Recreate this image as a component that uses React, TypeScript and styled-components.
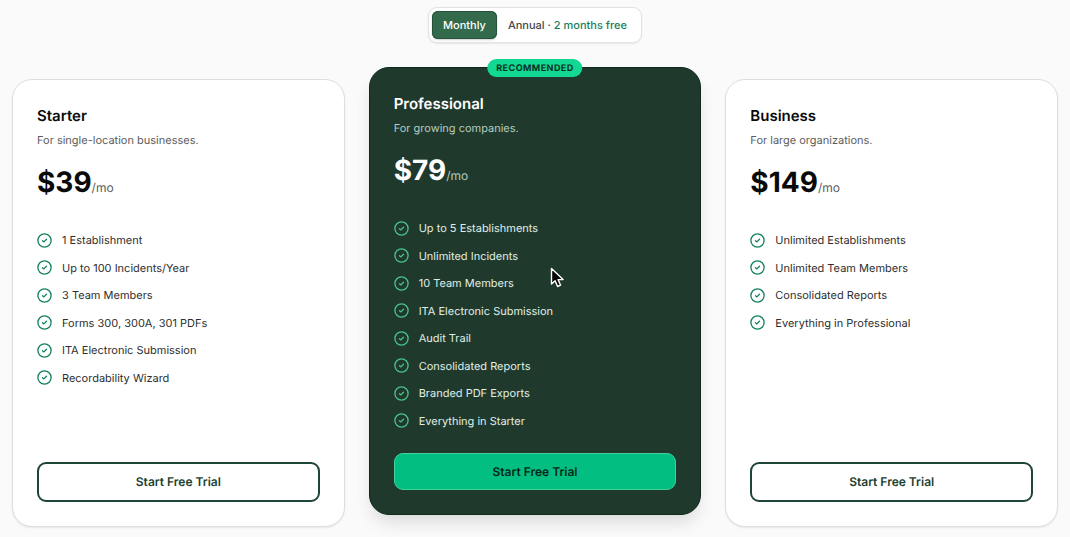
import { useState } from "react";
import styled, { createGlobalStyle, css } from "styled-components";

const GlobalStyle = createGlobalStyle`
  *, *::before, *::after { box-sizing: border-box; }
  body {
    margin: 0;
    background: #fafafa;
    color: #0a0a0a;
    font-family: Inter, "Liberation Sans", sans-serif;
    -webkit-font-smoothing: antialiased;
    text-rendering: geometricPrecision;
  }
  h2, p, ul { margin: 0; padding: 0; }
  button { font-family: inherit; text-rendering: inherit; cursor: pointer; }
`;

const Page = styled.main`
  display: flex;
  flex-direction: column;
  gap: 36px;
  padding: 7px 12px 10px;
`;

const Toggle = styled.div`
  align-self: center;
  display: flex;
  padding: 3px;
  background: #fff;
  border: 1px solid #e2e2e2;
  border-radius: 9px;
  box-shadow: 0 1px 2px rgba(0, 0, 0, 0.08);
`;

const ToggleButton = styled.button<{ $active: boolean }>`
  height: 28px;
  padding: 0 11px;
  border: 0;
  border-radius: 6px;
  font-size: 11px;
  font-weight: 500;
  line-height: 16px;
  background: ${(p) => (p.$active ? "#336a4c" : "transparent")};
  color: ${(p) => (p.$active ? "#fff" : "#44474a")};
  box-shadow: ${(p) => (p.$active ? "0 0 0 1px #24523a inset, 0 1px 2px rgba(0, 0, 0, 0.2)" : "none")};
`;

const Saving = styled.span`
  color: #16805c;
`;

const Plans = styled.div`
  display: grid;
  grid-template-columns: repeat(3, minmax(0, 1fr));
  gap: 24px;
`;

const Card = styled.section<{ $featured: boolean }>`
  position: relative;
  display: flex;
  flex-direction: column;
  padding: 24px;
  border: 1px solid #dedede;
  border-radius: 20px;
  background: #fff;
  box-shadow: 0 1px 2px rgba(0, 0, 0, 0.08);
  ${(p) =>
    p.$featured &&
    css`
      transform: translateY(-12px);
      border-color: #10291f;
      background: #1f392c;
      color: #fff;
      box-shadow: 0 10px 18px -4px rgba(0, 0, 0, 0.14);
    `}
`;

const Badge = styled.span`
  position: absolute;
  top: -9px;
  left: 50%;
  transform: translateX(-50%);
  padding: 1px 9px 0;
  border-radius: 9px;
  background: #13d893;
  color: #06321f;
  font-size: 9px;
  font-weight: 700;
  line-height: 17px;
  letter-spacing: 0.05em;
`;

const PlanName = styled.h2`
  font-size: 15px;
  font-weight: 600;
  line-height: 24px;
`;

const Tagline = styled.p<{ $featured: boolean }>`
  margin-top: 4px;
  font-size: 11px;
  line-height: 16px;
  color: ${(p) => (p.$featured ? "#b4cdbf" : "#5c5c5c")};
`;

const Price = styled.p`
  margin-top: 16px;
  font-size: 28px;
  font-weight: 700;
  line-height: 36px;
`;

const Period = styled.span<{ $featured: boolean }>`
  font-size: 12px;
  font-weight: 400;
  line-height: 16px;
  color: ${(p) => (p.$featured ? "#b4cdbf" : "#5c5c5c")};
`;

const Features = styled.ul`
  display: flex;
  flex-direction: column;
  gap: 11px;
  margin: 32px 0 24px;
  list-style: none;
`;

const Feature = styled.li<{ $featured: boolean }>`
  display: flex;
  align-items: center;
  gap: 10px;
  font-size: 11px;
  line-height: 1.5;
  color: ${(p) => (p.$featured ? "#e0efe6" : "#2e2e2e")};

  svg {
    flex: none;
    color: ${(p) => (p.$featured ? "#4cc38c" : "#128060")};
  }
`;

const TrialButton = styled.button<{ $featured: boolean }>`
  width: 100%;
  height: ${(p) => (p.$featured ? 37 : 40)}px;
  margin-top: auto;
  border: ${(p) => (p.$featured ? "1px solid #3fd39a" : "2px solid #1f4535")};
  border-radius: 9px;
  background: ${(p) => (p.$featured ? "#02be80" : "#fff")};
  color: ${(p) => (p.$featured ? "#06281a" : "#1d4030")};
  font-size: 12px;
  font-weight: 600;
  line-height: 16px;
`;

const Pointer = styled.svg`
  position: absolute;
  top: 199px;
  left: 180px;
  pointer-events: none;
`;

const CheckIcon = () => (
  <svg width="15" height="15" viewBox="0 0 15 15" fill="none" stroke="currentColor" aria-hidden="true">
    <circle cx="7.5" cy="7.5" r="6.6" strokeWidth="1.3" />
    <path d="M5.5 7.7 6.9 8.9 9.5 6.3" strokeWidth="1.3" strokeLinecap="round" strokeLinejoin="round" />
  </svg>
);

type Plan = {
  name: string;
  tagline: string;
  price: number;
  features: string[];
  featured?: boolean;
};

const plans: Plan[] = [
  {
    name: "Starter",
    tagline: "For single-location businesses.",
    price: 39,
    features: [
      "1 Establishment",
      "Up to 100 Incidents/Year",
      "3 Team Members",
      "Forms 300, 300A, 301 PDFs",
      "ITA Electronic Submission",
      "Recordability Wizard",
    ],
  },
  {
    name: "Professional",
    tagline: "For growing companies.",
    price: 79,
    featured: true,
    features: [
      "Up to 5 Establishments",
      "Unlimited Incidents",
      "10 Team Members",
      "ITA Electronic Submission",
      "Audit Trail",
      "Consolidated Reports",
      "Branded PDF Exports",
      "Everything in Starter",
    ],
  },
  {
    name: "Business",
    tagline: "For large organizations.",
    price: 149,
    features: [
      "Unlimited Establishments",
      "Unlimited Team Members",
      "Consolidated Reports",
      "Everything in Professional",
    ],
  },
];

function PlanCard({ plan }: { plan: Plan }) {
  const featured = Boolean(plan.featured);
  return (
    <Card $featured={featured}>
      {featured && <Badge>RECOMMENDED</Badge>}
      <PlanName>{plan.name}</PlanName>
      <Tagline $featured={featured}>{plan.tagline}</Tagline>
      <Price>
        ${plan.price}
        <Period $featured={featured}>/mo</Period>
      </Price>
      <Features>
        {plan.features.map((feature) => (
          <Feature key={feature} $featured={featured}>
            <CheckIcon />
            {feature}
          </Feature>
        ))}
      </Features>
      <TrialButton type="button" $featured={featured}>
        Start Free Trial
      </TrialButton>
      {featured && (
        <Pointer width="15" height="22" viewBox="0 0 15 22" aria-hidden="true">
          <path
            d="M1.5 1.5V17l3.6-3.3 2.5 5.8 3-1.3-2.5-5.6h5Z"
            fill="#080808"
            stroke="#fff"
            strokeWidth="1.4"
            strokeLinejoin="round"
          />
        </Pointer>
      )}
    </Card>
  );
}

export default function App() {
  const [annual, setAnnual] = useState(false);
  return (
    <>
      <GlobalStyle />
      <Page>
        <Toggle role="group" aria-label="Billing period">
          <ToggleButton type="button" $active={!annual} aria-pressed={!annual} onClick={() => setAnnual(false)}>
            Monthly
          </ToggleButton>
          <ToggleButton type="button" $active={annual} aria-pressed={annual} onClick={() => setAnnual(true)}>
            Annual · <Saving>2 months free</Saving>
          </ToggleButton>
        </Toggle>
        <Plans>
          {plans.map((plan) => (
            <PlanCard key={plan.name} plan={plan} />
          ))}
        </Plans>
      </Page>
    </>
  );
}
